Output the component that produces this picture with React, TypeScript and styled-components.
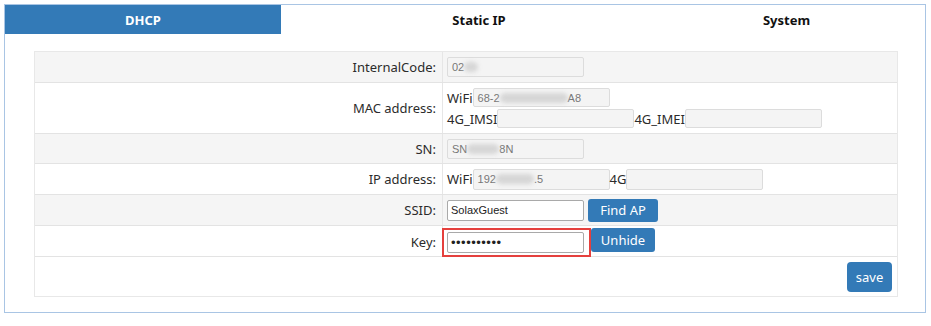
import React from "react";
import styled, { createGlobalStyle } from "styled-components";

const GlobalStyle = createGlobalStyle`
  html, body {
    margin: 0;
    padding: 0;
    background: #ffffff;
  }
  body {
    font-family: "Noto Sans", "Liberation Sans", sans-serif;
    color: #333;
  }
`;

const Page = styled.div`
  padding: 4px;
`;

const Panel = styled.div`
  box-sizing: border-box;
  width: 922px;
  height: 309px;
  border: 1px solid #a9c5e4;
  display: flex;
  flex-direction: column;
`;

const Tabs = styled.div`
  display: grid;
  grid-template-columns: 276px 1fr 277px;
  height: 29px;
`;

const Tab = styled.div<{ $active?: boolean; $shift?: number }>`
  display: flex;
  align-items: center;
  justify-content: center;
  padding-left: ${(p) => p.$shift ?? 0}px;
  font-size: 13px;
  font-weight: 700;
  color: ${(p) => (p.$active ? "#ffffff" : "#111")};
  background: ${(p) => (p.$active ? "#337ab7" : "transparent")};
`;

const Body = styled.div`
  padding: 17px 27px 0 29px;
`;

const Table = styled.div`
  border: 1px solid #e8e8e8;
  display: flex;
  flex-direction: column;
`;

const Row = styled.div<{ $shade?: boolean; $h: number; $last?: boolean }>`
  display: grid;
  grid-template-columns: 408px 1fr;
  height: ${(p) => p.$h}px;
  background: ${(p) => (p.$shade ? "#f5f5f5" : "#ffffff")};
  border-bottom: ${(p) => (p.$last ? "none" : "1px solid #e3e3e3")};
`;

const Label = styled.div`
  display: flex;
  align-items: center;
  justify-content: flex-end;
  padding-right: 6px;
  font-size: 13px;
  color: #2b2b2b;
  border-right: 1px solid #e6e6e6;
`;

const Value = styled.div<{ $col?: boolean; $top?: boolean }>`
  display: flex;
  flex-direction: ${(p) => (p.$col ? "column" : "row")};
  justify-content: ${(p) => (p.$col ? "center" : "flex-start")};
  align-items: ${(p) => (p.$col || p.$top ? "flex-start" : "center")};
  gap: ${(p) => (p.$col ? "2px" : "0")};
  padding-left: 4px;
`;

const Line = styled.div`
  display: flex;
  align-items: center;
`;

const Prefix = styled.span`
  font-size: 13px;
  color: #2b2b2b;
`;

const ReadBox = styled.div<{ $h?: number }>`
  box-sizing: border-box;
  width: 137px;
  height: ${(p) => p.$h ?? 20}px;
  border: 1px solid #dcdcdc;
  border-radius: 2px;
  background: #f4f4f4;
  display: flex;
  align-items: center;
  padding-left: 4px;
  font-size: 11px;
  color: #777;
  font-family: "Liberation Sans", sans-serif;
`;

const Blur = styled.span<{ $w: number }>`
  display: inline-block;
  width: ${(p) => p.$w}px;
  height: 10px;
  border-radius: 5px;
  background: #d6d6d6;
  filter: blur(2px);
`;

const TextInput = styled.input<{ $dots?: boolean }>`
  box-sizing: border-box;
  width: 137px;
  height: 21px;
  border: 1px solid #a9a9a9;
  border-radius: 2px;
  padding: 0 3px;
  font-family: "Liberation Sans", sans-serif;
  font-size: ${(p) => (p.$dots ? "13px" : "11px")};
  letter-spacing: ${(p) => (p.$dots ? "0.5px" : "0")};
  color: #222;
  background: #fff;
  outline: none;
`;

const Highlight = styled.div`
  box-sizing: border-box;
  margin-left: -5px;
  margin-top: 2px;
  height: 29px;
  width: 149px;
  border: 2px solid #e5403d;
  display: flex;
  align-items: center;
  padding-left: 3px;
`;

const Button = styled.button<{ $w: number; $h?: number; $gap?: number; $drop?: number; $r?: number }>`
  box-sizing: border-box;
  width: ${(p) => p.$w}px;
  height: ${(p) => p.$h ?? 23}px;
  margin-left: ${(p) => p.$gap ?? 0}px;
  margin-top: ${(p) => p.$drop ?? 0}px;
  border: none;
  border-radius: ${(p) => p.$r ?? 3}px;
  background: #337ab7;
  color: #fff;
  font-family: "Noto Sans", sans-serif;
  font-size: 13px;
  padding: 0;
`;

const SaveCell = styled.div`
  grid-column: 1 / span 2;
  display: flex;
  justify-content: flex-end;
  align-items: center;
  padding-right: 5px;
`;

export default function App() {
  return (
    <>
      <GlobalStyle />
      <Page>
        <Panel>
          <Tabs>
            <Tab $active>DHCP</Tab>
            <Tab $shift={29}>Static IP</Tab>
            <Tab>System</Tab>
          </Tabs>
          <Body>
            <Table>
              <Row $shade $h={30}>
                <Label>InternalCode:</Label>
                <Value>
                  <ReadBox>
                    02
                    <Blur $w={14} />
                  </ReadBox>
                </Value>
              </Row>
              <Row $h={50}>
                <Label>MAC address:</Label>
                <Value $col>
                  <Line>
                    <Prefix>WiFi</Prefix>
                    <ReadBox $h={19}>
                      68-2
                      <Blur $w={68} />
                      A8
                    </ReadBox>
                  </Line>
                  <Line>
                    <Prefix>4G_IMSI</Prefix>
                    <ReadBox $h={19} />
                    <Prefix>4G_IMEI</Prefix>
                    <ReadBox $h={19} />
                  </Line>
                </Value>
              </Row>
              <Row $shade $h={29}>
                <Label>SN:</Label>
                <Value>
                  <ReadBox>
                    SN
                    <Blur $w={32} />
                    8N
                  </ReadBox>
                </Value>
              </Row>
              <Row $h={30}>
                <Label>IP address:</Label>
                <Value>
                  <Prefix>WiFi</Prefix>
                  <ReadBox $h={21}>
                    192
                    <Blur $w={38} />
                    .5
                  </ReadBox>
                  <Prefix>4G</Prefix>
                  <ReadBox $h={21} />
                </Value>
              </Row>
              <Row $shade $h={30}>
                <Label>SSID:</Label>
                <Value>
                  <TextInput defaultValue="SolaxGuest" />
                  <Button $w={70} $gap={4}>
                    Find AP
                  </Button>
                </Value>
              </Row>
              <Row $h={30}>
                <Label>Key:</Label>
                <Value $top>
                  <Highlight>
                    <TextInput $dots type="password" defaultValue="1234567890" />
                  </Highlight>
                  <Button $w={64} $h={24} $drop={2}>
                    Unhide
                  </Button>
                </Value>
              </Row>
              <Row $h={39} $last>
                <SaveCell>
                  <Button $w={45} $h={30} $r={4}>
                    save
                  </Button>
                </SaveCell>
              </Row>
            </Table>
          </Body>
        </Panel>
      </Page>
    </>
  );
}
